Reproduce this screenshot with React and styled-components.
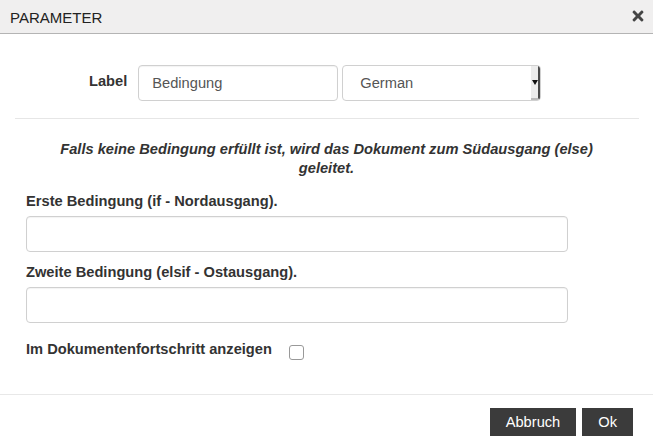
import styled, { createGlobalStyle } from "styled-components"
import { FaTimes } from "react-icons/fa"

const Global = createGlobalStyle`
body{
    margin:0;
    background:#fff;
    font-family:"Liberation Sans", Arial, sans-serif;
    color:#333;
}
`

function App() {
    return (
        <>
            <Global />
            <Modal>
                <Header>
                    <Title>PARAMETER</Title>
                    <Close><FaTimes /></Close>
                </Header>

                <LabelRow>
                    <LabelText>Label</LabelText>
                    <TextInput width={200} defaultValue="Bedingung" />
                    <FakeSelect>
                        <span>German</span>
                        <Arrow />
                    </FakeSelect>
                </LabelRow>

                <Divider />

                <Info>
                    Falls keine Bedingung erfüllt ist, wird das Dokument zum Südausgang (else) geleitet.
                </Info>

                <Field>
                    <FieldLabel>Erste Bedingung (if - Nordausgang).</FieldLabel>
                    <TextInput width={542} />
                </Field>
                <Field>
                    <FieldLabel>Zweite Bedingung (elsif - Ostausgang).</FieldLabel>
                    <TextInput width={542} />
                </Field>

                <CheckRow>
                    <FieldLabel>Im Dokumentenfortschritt anzeigen</FieldLabel>
                    <Check type="checkbox" />
                </CheckRow>

                <Footer>
                    <Button>Abbruch</Button>
                    <Button>Ok</Button>
                </Footer>
            </Modal>
        </>
    )
}

export default App;

const Modal = styled.div`
width:653px;
height:447px;
display:flex;
flex-direction:column;
overflow:hidden;
`
const Header = styled.div`
height:33px;
flex-shrink:0;
background:#f0efef;
border-bottom:1px solid #b4b4b4;
display:flex;
align-items:center;
justify-content:space-between;
padding:0 7px 0 10px;
`
const Title = styled.div`
font-size:15px;
color:#222;
margin-top:1px;
`
const Close = styled.div`
display:flex;
align-items:center;
color:#444;
font-size:16px;
margin-top:-2px;
`
const LabelRow = styled.div`
display:flex;
align-items:center;
gap:4px;
margin-top:31px;
padding-left:89px;
`
const LabelText = styled.div`
font-weight:bold;
font-size:14.67px;
margin-right:7px;
margin-top:-4px;
`
const TextInput = styled.input`
box-sizing:border-box;
width:${p => p.width}px;
height:36px;
border:1px solid #d0d0d0;
border-radius:4px;
box-shadow:inset 0 1px 1px rgba(0,0,0,0.05);
padding:0 13px;
font-family:"Liberation Sans", Arial, sans-serif;
font-size:14.67px;
color:#555;
outline:none;
`
const FakeSelect = styled.div`
box-sizing:border-box;
width:199px;
height:36px;
border:1px solid #d0d0d0;
border-radius:4px;
display:flex;
align-items:center;
justify-content:space-between;
padding-left:17px;
font-size:14.67px;
color:#555;
overflow:hidden;
`
const Arrow = styled.div`
width:9px;
height:34px;
background:#ececec;
border-right:2px solid #4a4a4a;
border-bottom:2px solid #bbb;
box-sizing:border-box;
display:flex;
align-items:center;
justify-content:center;
&::after{
    content:"";
    border-left:3px solid transparent;
    border-right:3px solid transparent;
    border-top:5px solid #111;
    margin-left:1px;
}
`
const Divider = styled.div`
height:1px;
background:#e6e6e6;
margin:17px 14px 0 15px;
`
const Info = styled.div`
margin:21px 40px 0;
text-align:center;
font-weight:bold;
font-style:italic;
font-size:14.67px;
line-height:19px;
color:#333;
`
const Field = styled.div`
display:flex;
flex-direction:column;
gap:5px;
padding-left:26px;
margin-top:13px;
&+&{
    margin-top:10px;
}
`
const FieldLabel = styled.div`
font-weight:bold;
font-size:14.67px;
line-height:20px;
`
const CheckRow = styled.div`
display:flex;
align-items:flex-start;
gap:17px;
padding-left:26px;
margin-top:16px;
`
const Check = styled.input`
appearance:none;
width:15px;
height:15px;
margin:6px 0 0 0;
border:1px solid #999;
border-radius:3px;
background:#fff;
box-sizing:border-box;
`
const Footer = styled.div`
margin-top:auto;
border-top:1px solid #e8e8e8;
height:53px;
display:flex;
justify-content:flex-end;
align-items:center;
gap:6px;
padding:1px 20px 0 0;
box-sizing:border-box;
`
const Button = styled.button`
height:28px;
padding:0 16px;
background:#3b3b3b;
color:#fff;
border:none;
border-radius:0;
font-family:"Liberation Sans", Arial, sans-serif;
font-size:14.67px;
`
